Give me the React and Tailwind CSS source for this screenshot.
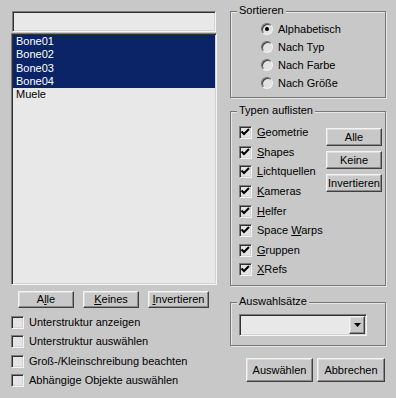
import React from 'react';

const raised =
	'border border-t-[#f4f4f4] border-l-[#f4f4f4] border-r-[#404040] border-b-[#404040] shadow-[inset_-1px_-1px_0_#8a8a8a,inset_1px_1px_0_#dcdcdc] bg-[#c8c8c8]';
const sunken =
	'border border-t-[#7c7c7c] border-l-[#7c7c7c] border-r-[#f4f4f4] border-b-[#f4f4f4] shadow-[inset_1px_1px_0_#303030,inset_-1px_-1px_0_#d4d4d4]';

function Btn({ children, className }) {
	return (
		<div className={`flex items-center justify-center leading-none ${raised} ${className}`}>
			{children}
		</div>
	);
}

function Check({ checked }) {
	return (
		<div className={`w-[13px] h-[13px] shrink-0 bg-[#e4e4e4] ${sunken}`}>
			{checked && (
				<svg width="11" height="11" viewBox="0 0 11 11">
					<path d="M1.5 4.5 L4 7 L9 2" stroke="#000" strokeWidth="2" fill="none" />
				</svg>
			)}
		</div>
	);
}

function Radio({ checked }) {
	return (
		<div className="relative w-[12px] h-[12px] shrink-0 rounded-full bg-[#e2e2e2] border border-t-[#6c6c6c] border-l-[#6c6c6c] border-r-[#f2f2f2] border-b-[#f2f2f2] shadow-[inset_1px_1px_0_#404040]">
			{checked && <div className="absolute left-[3px] top-[3px] w-[4px] h-[4px] rounded-full bg-black" />}
		</div>
	);
}

function Group({ label, className, children }) {
	return (
		<div
			className={`relative border border-[#777777] shadow-[1px_1px_0_#e6e6e6,inset_1px_1px_0_#e6e6e6] ${className}`}
		>
			<span className="absolute -top-[8px] left-[6px] px-[2px] bg-[#c8c8c8] leading-[13px]">{label}</span>
			{children}
		</div>
	);
}

function U({ children }) {
	return <span className="underline underline-offset-[1px]">{children}</span>;
}

export default function App() {
	const objects = [
		{ name: 'Bone01', sel: true },
		{ name: 'Bone02', sel: true },
		{ name: 'Bone03', sel: true },
		{ name: 'Bone04', sel: true },
		{ name: 'Muele', sel: false },
	];

	const types = [
		[<U>G</U>, 'eometrie'],
		[<U>S</U>, 'hapes'],
		[<U>L</U>, 'ichtquellen'],
		[<U>K</U>, 'ameras'],
		[<U>H</U>, 'elfer'],
		['Space ', <U>W</U>, 'arps'],
		[<U>G</U>, 'ruppen'],
		[<U>X</U>, 'Refs'],
	];

	return (
		<div
			className="w-[396px] h-[398px] bg-[#c8c8c8] text-black text-[11px] leading-[13px] flex pt-[11px] pl-[11px] overflow-hidden"
			style={{ fontFamily: '"Liberation Sans", Arial, sans-serif' }}
		>
			{/* left side */}
			<div className="w-[206px] flex flex-col">
				<div className={`h-[21px] ml-[1px] w-[204px] bg-[#e8e8e8] ${sunken}`} />
				<div className={`mt-[1px] h-[252px] w-[206px] bg-[#e8e8e8] p-[1px] ${sunken}`}>
					{objects.map((o) => (
						<div
							key={o.name}
							className={`h-[13.25px] pl-[3px] leading-[13px] ${o.sel ? 'bg-[#0b2468] text-white' : ''}`}
						>
							{o.name}
						</div>
					))}
				</div>
				<div className="flex mt-[6px] pl-[7px] gap-[9px]">
					<Btn className="w-[56px] h-[17px]">
						A<U>l</U>le
					</Btn>
					<Btn className="w-[56px] h-[17px]">
						<U>K</U>eines
					</Btn>
					<Btn className="w-[61px] h-[17px]">
						<U>I</U>nvertieren
					</Btn>
				</div>
				<div className="flex flex-col mt-[8px] gap-[6.3px]">
					{[
						'Unterstruktur anzeigen',
						'Unterstruktur auswählen',
						'Groß-/Kleinschreibung beachten',
						'Abhängige Objekte auswählen',
					].map((t) => (
						<div key={t} className="flex items-center gap-[5px]">
							<Check />
							<span>{t}</span>
						</div>
					))}
				</div>
			</div>

			{/* right side */}
			<div className="ml-[13px] w-[156px] flex flex-col">
				<Group label="Sortieren" className="h-[87px] pt-[8px]">
					{['Alphabetisch', 'Nach Typ', 'Nach Farbe', 'Nach Größe'].map((t, i) => (
						<div key={t} className="h-[18px] flex items-center pl-[30px] gap-[5px]">
							<Radio checked={i === 0} />
							<span>{t}</span>
						</div>
					))}
				</Group>

				<Group label="Typen auflisten" className="mt-[13px] h-[175px] flex">
					<div className="pt-[11px] pl-[8px] flex flex-col">
						{types.map((parts, i) => (
							<div key={i} className="h-[19.6px] flex items-center gap-[5px]">
								<Check checked />
								<span>{parts}</span>
							</div>
						))}
					</div>
					<div className="ml-auto mr-[3px] pt-[16px] flex flex-col gap-[5px]">
						<Btn className="w-[56px] h-[18px]">Alle</Btn>
						<Btn className="w-[56px] h-[18px]">Keine</Btn>
						<Btn className="w-[56px] h-[18px]">Invertieren</Btn>
					</div>
				</Group>

				<Group label="Auswahlsätze" className="mt-[16px] h-[44px] pt-[11px] pl-[8px]">
					<div className={`w-[128px] h-[22px] bg-[#e8e8e8] flex justify-end p-[1px] ${sunken}`}>
						<div className={`w-[16px] h-full flex items-center justify-center ${raised}`}>
							<svg width="7" height="4" viewBox="0 0 7 4">
								<path d="M0 0 H7 L3.5 4 Z" fill="#000" />
							</svg>
						</div>
					</div>
				</Group>

				<div className="flex mt-[12px] pl-[16px] gap-[4px]">
					<Btn className="w-[67px] h-[24px]">Auswählen</Btn>
					<Btn className="w-[68px] h-[24px]">Abbrechen</Btn>
				</div>
			</div>
		</div>
	);
}
